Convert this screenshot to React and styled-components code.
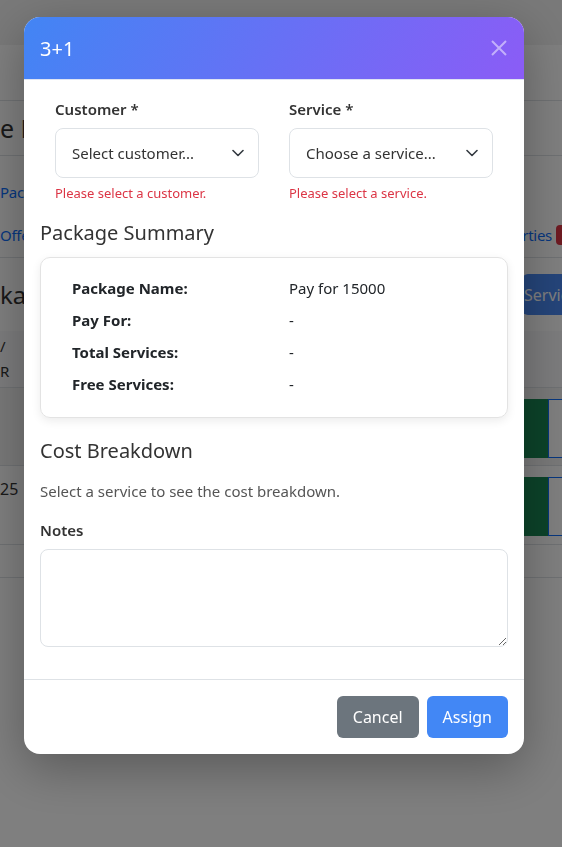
import React from 'react';
import styled, { createGlobalStyle } from 'styled-components';

const GlobalStyle = createGlobalStyle`
  * { box-sizing: border-box; }
  html, body { margin: 0; padding: 0; }
  body {
    font-family: "Noto Sans", "Open Sans", sans-serif;
    color: #212529;
    background: #fff;
    overflow: hidden;
  }
`;

// ---------- page behind the dialog (only its edges show) ----------
const Page = styled.div`
    width: 620px;
    height: 847px;
    background: #fff;
`;
const NavBar = styled.div`
    height: 45px;
    background: #f2f2f2;
`;
const SubBar = styled.div`
    height: 56px;
    border-bottom: 1px solid #dee2e6;
`;
const TitleBar = styled.div`
    height: 55px;
    border-bottom: 1px solid #dee2e6;
    display: flex;
    align-items: center;
    font-size: 25px;
    color: #333;
`;
const Tabs = styled.div`
    height: 102px;
    border-bottom: 1px solid #dee2e6;
    display: flex;
    justify-content: space-between;
    align-items: flex-end;
    padding: 25px 44px 10px 0;
`;
const TabColumn = styled.div`
    display: flex;
    flex-direction: column;
    gap: 19px;
`;
const TabLink = styled.a`
    color: #0d6efd;
    font-size: 15px;
    line-height: 24px;
    letter-spacing: -0.3px;
    display: flex;
    align-items: center;
    gap: 4px;
`;
const Badge = styled.span`
    width: 20px;
    height: 20px;
    border-radius: 4px;
    background: #dc3545;
`;
const SectionRow = styled.div`
    height: 73px;
    display: flex;
    justify-content: space-between;
    align-items: center;
    padding: 0 8px 0 0;
    font-size: 24px;
    color: #333;
`;
const PageButton = styled.button`
    width: 90px;
    height: 41px;
    border: none;
    border-radius: 6px;
    background: #4a8af4;
    color: #fff;
    font-family: inherit;
    font-size: 16px;
    text-align: left;
    padding: 0 2px;
`;
const TableHead = styled.div`
    height: 57px;
    background: #f8f9fa;
    border-bottom: 1px solid #dee2e6;
    padding-top: 3px;
    font-size: 15px;
    line-height: 25px;
    color: #333;
`;
const TableRow = styled.div`
    height: ${(p) => p.$h}px;
    background: ${(p) => (p.$shade ? '#f3f3f3' : '#fff')};
    border-bottom: 1px solid #dee2e6;
    display: flex;
    justify-content: space-between;
    align-items: flex-start;
    padding: 11px 12px 0 0;
    font-size: 16px;
    line-height: 24px;
    color: #333;
`;
const Actions = styled.div`
    display: flex;
`;
const GreenCell = styled.div`
    width: 100px;
    height: 59px;
    background: #198754;
`;
const OutlineCell = styled.div`
    width: 60px;
    height: 59px;
    border: 1px solid #0d6efd;
    background: #fff;
`;

// ---------- dialog ----------
const Overlay = styled.div`
    position: fixed;
    inset: 0;
    background: rgba(0, 0, 0, 0.5);
    padding: 17px 38px 0 24px;
`;
const Dialog = styled.div`
    width: 500px;
    background: #fff;
    border-radius: 16px;
    overflow: hidden;
    box-shadow: 0 14px 50px rgba(0, 0, 0, 0.3);
`;
const Header = styled.div`
    height: 63px;
    display: flex;
    align-items: center;
    justify-content: space-between;
    padding: 0 17px 0 16px;
    background: linear-gradient(120deg, #4285f4 0%, #8b5cf6 100%);
    border-bottom: 1px solid #dfe4f3;
`;
const Title = styled.h5`
    margin: 0;
    font-size: 20px;
    font-weight: 400;
    color: #fff;
`;
const CloseButton = styled.button`
    background: none;
    border: none;
    padding: 0;
    width: 16px;
    height: 16px;
    display: flex;
`;
const Body = styled.div`
    padding: 18px 16px 32px;
`;
const FieldRow = styled.div`
    display: grid;
    grid-template-columns: 1fr 1fr;
`;
const Field = styled.div`
    padding: 0 15px;
`;
const Label = styled.label`
    display: block;
    font-size: 15px;
    font-weight: 600;
    line-height: 22px;
    color: #333;
    margin-bottom: 8px;
`;
const Select = styled.div`
    height: 50px;
    border: 1px solid #dee2e6;
    border-radius: 8px;
    display: flex;
    align-items: center;
    justify-content: space-between;
    padding: 0 14px 0 16px;
    font-size: 15px;
    color: #333;
`;
const ErrorText = styled.div`
    margin-top: 6px;
    font-size: 13px;
    line-height: 18px;
    color: #dc3545;
`;
const SectionTitle = styled.h5`
    margin: ${(p) => p.$mt}px 0 ${(p) => p.$mb}px;
    font-size: 20px;
    font-weight: 400;
    line-height: 24px;
    color: #333;
`;
const Card = styled.div`
    border: 1px solid #e3e3e3;
    border-radius: 10px;
    box-shadow: 0 3px 10px rgba(0, 0, 0, 0.08);
    padding: 14px 16px 17px;
`;
const SummaryRow = styled.div`
    display: grid;
    grid-template-columns: 1fr 1fr;
    height: 32px;
    align-items: center;
    font-size: 15px;
    color: #212529;
`;
const SummaryLabel = styled.div`
    padding: 0 15px;
    font-weight: 700;
`;
const SummaryValue = styled.div`
    padding: 0 15px;
`;
const Hint = styled.p`
    margin: 0 0 17px;
    font-size: 15px;
    line-height: 22px;
    color: #555;
`;
const Notes = styled.textarea`
    display: block;
    width: 100%;
    height: 98px;
    border: 1px solid #dee2e6;
    border-radius: 8px;
    font-family: inherit;
    font-size: 15px;
    padding: 8px 12px;
    resize: vertical;
    outline: none;
`;
const Footer = styled.div`
    border-top: 1px solid #dee2e6;
    padding: 16px;
    display: flex;
    justify-content: flex-end;
    gap: 8px;
`;
const Button = styled.button`
    height: 42px;
    padding: 0 16px;
    border: none;
    border-radius: 6px;
    background: ${(p) => (p.$primary ? '#4287f5' : '#6c757d')};
    color: #fff;
    font-family: inherit;
    font-size: 16px;
`;

const Chevron = () => (
    <svg width="12" height="8" viewBox="0 0 12 8" fill="none">
        <polyline points="1,1.5 6,6.5 11,1.5" stroke="#343a40" strokeWidth="1.6" strokeLinecap="round" strokeLinejoin="round" />
    </svg>
);

const CloseIcon = () => (
    <svg width="16" height="16" viewBox="0 0 16 16" fill="none">
        <path d="M1 1L15 15M15 1L1 15" stroke="rgba(255,255,255,0.5)" strokeWidth="2" />
    </svg>
);

const summary = [
    ['Package Name:', 'Pay for 15000'],
    ['Pay For:', '-'],
    ['Total Services:', '-'],
    ['Free Services:', '-'],
];

const App = () => {
    return (
        <>
            <GlobalStyle />
            <Page>
                <NavBar />
                <SubBar />
                <TitleBar>e M</TitleBar>
                <Tabs>
                    <TabColumn>
                        <TabLink>Pack</TabLink>
                        <TabLink>Offe</TabLink>
                    </TabColumn>
                    <TabLink>rties <Badge /></TabLink>
                </Tabs>
                <SectionRow>
                    <span>kag</span>
                    <PageButton>Servic</PageButton>
                </SectionRow>
                <TableHead>
                    <div>/</div>
                    <div>R</div>
                </TableHead>
                <TableRow $h={78} $shade>
                    <span />
                    <Actions><GreenCell /><OutlineCell /></Actions>
                </TableRow>
                <TableRow $h={79}>
                    <span>25</span>
                    <Actions><GreenCell /><OutlineCell /></Actions>
                </TableRow>
                <TableRow $h={33} />
            </Page>

            <Overlay>
                <Dialog>
                    <Header>
                        <Title>3+1</Title>
                        <CloseButton><CloseIcon /></CloseButton>
                    </Header>
                    <Body>
                        <FieldRow>
                            <Field>
                                <Label>Customer *</Label>
                                <Select>Select customer... <Chevron /></Select>
                                <ErrorText>Please select a customer.</ErrorText>
                            </Field>
                            <Field>
                                <Label>Service *</Label>
                                <Select>Choose a service... <Chevron /></Select>
                                <ErrorText>Please select a service.</ErrorText>
                            </Field>
                        </FieldRow>

                        <SectionTitle $mt={19} $mb={12}>Package Summary</SectionTitle>
                        <Card>
                            {summary.map(([k, v]) => (
                                <SummaryRow key={k}>
                                    <SummaryLabel>{k}</SummaryLabel>
                                    <SummaryValue>{v}</SummaryValue>
                                </SummaryRow>
                            ))}
                        </Card>

                        <SectionTitle $mt={21} $mb={17}>Cost Breakdown</SectionTitle>
                        <Hint>Select a service to see the cost breakdown.</Hint>

                        <Label>Notes</Label>
                        <Notes />
                    </Body>
                    <Footer>
                        <Button>Cancel</Button>
                        <Button $primary>Assign</Button>
                    </Footer>
                </Dialog>
            </Overlay>
        </>
    );
};

export default App;
